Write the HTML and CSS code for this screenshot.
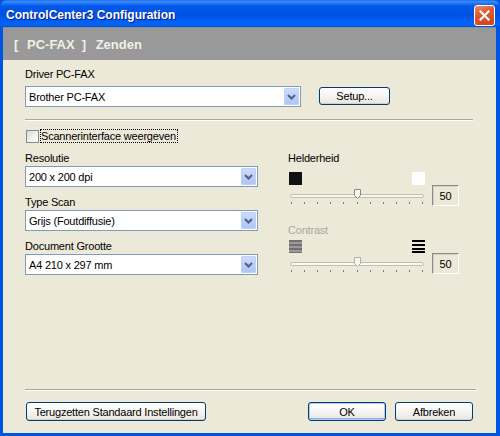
FILE: index.html
```html
<!DOCTYPE html>
<html lang="nl">
<head>
    <meta charset="UTF-8">
    <title>ControlCenter3 Configuration</title>
    <link rel="stylesheet" href="styles.css">
</head>
<body>
    <div class="window">
        <div class="titlebar">
            <span class="title">ControlCenter3 Configuration</span>
            <div class="close-btn">
                <svg width="11" height="11" viewBox="0 0 11 11">
                    <path d="M1.5 1.5 L9.5 9.5 M9.5 1.5 L1.5 9.5" stroke="#fff" stroke-width="2.2" stroke-linecap="square"/>
                </svg>
            </div>
        </div>

        <div class="frame">
            <div class="header">
                <span class="bracket">[</span>
                <span class="tab-name">PC-FAX</span>
                <span class="bracket">]</span>
                <span class="tab-sub">Zenden</span>
            </div>

            <div class="content">
                <div class="label">Driver PC-FAX</div>
                <div class="driver-row">
                    <div class="select select-driver">
                        <span class="select-text">Brother PC-FAX</span>
                        <span class="select-arrow">
                            <svg width="9" height="6" viewBox="0 0 9 6"><path d="M1 1 L4.5 4.5 L8 1" fill="none" stroke="#4d6185" stroke-width="2"/></svg>
                        </span>
                    </div>
                    <div class="btn btn-setup">Setup...</div>
                </div>

                <div class="separator separator-top"></div>

                <div class="check-row">
                    <span class="checkbox"></span>
                    <span class="check-label">Scannerinterface weergeven</span>
                </div>

                <div class="columns">
                    <div class="col-left">
                        <div class="field">
                            <div class="label">Resolutie</div>
                            <div class="select">
                                <span class="select-text">200 x 200 dpi</span>
                                <span class="select-arrow">
                                    <svg width="9" height="6" viewBox="0 0 9 6"><path d="M1 1 L4.5 4.5 L8 1" fill="none" stroke="#4d6185" stroke-width="2"/></svg>
                                </span>
                            </div>
                        </div>
                        <div class="field">
                            <div class="label">Type Scan</div>
                            <div class="select">
                                <span class="select-text">Grijs (Foutdiffusie)</span>
                                <span class="select-arrow">
                                    <svg width="9" height="6" viewBox="0 0 9 6"><path d="M1 1 L4.5 4.5 L8 1" fill="none" stroke="#4d6185" stroke-width="2"/></svg>
                                </span>
                            </div>
                        </div>
                        <div class="field">
                            <div class="label">Document Grootte</div>
                            <div class="select">
                                <span class="select-text">A4 210 x 297 mm</span>
                                <span class="select-arrow">
                                    <svg width="9" height="6" viewBox="0 0 9 6"><path d="M1 1 L4.5 4.5 L8 1" fill="none" stroke="#4d6185" stroke-width="2"/></svg>
                                </span>
                            </div>
                        </div>
                    </div>

                    <div class="col-right">
                        <div class="label">Helderheid</div>
                        <div class="slider-grid slider-bright">
                            <div class="slider-icons">
                                <span class="swatch swatch-black"></span>
                                <span class="swatch swatch-white"></span>
                            </div>
                            <span></span>
                            <svg class="slider" width="136" height="21" viewBox="0 0 136 21">
                                <rect x="1.5" y="9.5" width="133" height="3" rx="1.5" fill="#f7f6f1" stroke="#c2bfb0"/>
                                <g fill="#7a7a7a">
                                    <rect x="2" y="17" width="1" height="2"/><rect x="15" y="17" width="1" height="2"/>
                                    <rect x="28" y="17" width="1" height="2"/><rect x="41" y="17" width="1" height="2"/>
                                    <rect x="54" y="17" width="1" height="2"/><rect x="68" y="17" width="1" height="2"/>
                                    <rect x="81" y="17" width="1" height="2"/><rect x="94" y="17" width="1" height="2"/>
                                    <rect x="107" y="17" width="1" height="2"/><rect x="120" y="17" width="1" height="2"/>
                                    <rect x="133" y="17" width="1" height="2"/>
                                </g>
                                <path d="M65.5 4.5 H71.5 V10.5 L68.5 13.5 L65.5 10.5 Z" fill="#f6f6f2" stroke="#8a8a82"/>
                            </svg>
                            <div class="value-box">50</div>
                        </div>

                        <div class="label label-disabled">Contrast</div>
                        <div class="slider-grid slider-contrast">
                            <div class="slider-icons">
                                <svg width="13" height="13" viewBox="0 0 13 13">
                                    <rect width="13" height="13" fill="#9a9a9a"/>
                                    <rect y="0" width="13" height="2" fill="#707070"/>
                                    <rect y="4" width="13" height="2" fill="#707070"/>
                                    <rect y="8" width="13" height="2" fill="#707070"/>
                                    <rect y="12" width="13" height="1" fill="#707070"/>
                                </svg>
                                <svg width="13" height="13" viewBox="0 0 13 13">
                                    <rect y="0" width="13" height="2" fill="#000"/>
                                    <rect y="4" width="13" height="2" fill="#000"/>
                                    <rect y="8" width="13" height="2" fill="#000"/>
                                    <rect y="11" width="13" height="2" fill="#000"/>
                                </svg>
                            </div>
                            <span></span>
                            <svg class="slider" width="136" height="21" viewBox="0 0 136 21">
                                <rect x="1.5" y="9.5" width="133" height="3" rx="1.5" fill="#f7f6f1" stroke="#c2bfb0"/>
                                <g fill="#7a7a7a">
                                    <rect x="2" y="17" width="1" height="2"/><rect x="15" y="17" width="1" height="2"/>
                                    <rect x="28" y="17" width="1" height="2"/><rect x="41" y="17" width="1" height="2"/>
                                    <rect x="54" y="17" width="1" height="2"/><rect x="68" y="17" width="1" height="2"/>
                                    <rect x="81" y="17" width="1" height="2"/><rect x="94" y="17" width="1" height="2"/>
                                    <rect x="107" y="17" width="1" height="2"/><rect x="120" y="17" width="1" height="2"/>
                                    <rect x="133" y="17" width="1" height="2"/>
                                </g>
                                <path d="M65.5 4.5 H71.5 V10.5 L68.5 13.5 L65.5 10.5 Z" fill="#f6f6f2" stroke="#b0b0a8"/>
                            </svg>
                            <div class="value-box">50</div>
                        </div>
                    </div>
                </div>

                <div class="footer">
                    <div class="separator separator-bottom"></div>
                    <div class="button-row">
                        <div class="btn btn-reset">Terugzetten Standaard Instellingen</div>
                        <div class="button-group">
                            <div class="btn btn-default">OK</div>
                            <div class="btn btn-cancel">Afbreken</div>
                        </div>
                    </div>
                </div>
            </div>
        </div>
    </div>
</body>
</html>
```

FILE: styles.css
```css
* {
    margin: 0;
    padding: 0;
    box-sizing: border-box;
}

body {
    font-family: 'Liberation Sans', Arial, sans-serif;
    font-size: 11px;
    letter-spacing: -0.2px;
    color: #000;
    background: #ece9d8;
    overflow: hidden;
}

.window {
    width: 500px;
    height: 436px;
    display: flex;
    flex-direction: column;
    background: #0054e3;
}

/* Title bar */
.titlebar {
    height: 27px;
    display: flex;
    align-items: center;
    justify-content: space-between;
    padding: 0 5px 0 6px;
    border-radius: 7px 7px 0 0;
    background: linear-gradient(180deg,
        #0a5be0 0, #3d8ffc 1px, #2a7cf5 3px, #0058e8 6px,
        #0053e4 16px, #005ef3 21px, #0066fb 25px, #0052dc 27px);
}

.title {
    font-weight: bold;
    font-size: 12px;
    letter-spacing: 0;
    color: #fff;
    margin-top: 2px;
    text-shadow: 1px 1px 0 #0a1883;
}

.close-btn {
    width: 21px;
    height: 21px;
    margin-top: 3px;
    display: flex;
    align-items: center;
    justify-content: center;
    border: 1px solid #fff;
    border-radius: 3px;
    background: linear-gradient(160deg, #ec8a6a 0, #e0582f 40%, #cc4520 100%);
}

/* Frame */
.frame {
    flex: 1;
    display: flex;
    flex-direction: column;
    border-left: 3px solid #0054e3;
    border-right: 4px solid #0054e3;
    border-bottom: 3px solid #0054e3;
}

.header {
    height: 33px;
    display: flex;
    align-items: center;
    padding-left: 11px;
    padding-top: 1px;
    background: #999;
    border-top: 1px solid #8a8a8a;
    font-weight: bold;
    font-size: 13px;
    letter-spacing: 0;
    color: #f2f0e6;
}

.bracket {
    width: 4px;
}

.tab-name {
    margin: 0 7px 0 9px;
}

.tab-sub {
    margin-left: 10px;
}

.content {
    flex: 1;
    display: flex;
    flex-direction: column;
    padding: 7px 0 12px 22px;
    background: #ece9d8;
}

.label {
    line-height: 14px;
    margin-bottom: 5px;
}

.label-disabled {
    color: #aca899;
}

/* Combo boxes */
.driver-row {
    display: flex;
    align-items: flex-start;
}

.select {
    width: 233px;
    height: 21px;
    display: flex;
    align-items: center;
    justify-content: space-between;
    border: 1px solid #7f9db9;
    background: #fff;
    padding: 0 1px 0 3px;
}

.select-driver {
    width: 276px;
}

.select-arrow {
    width: 15px;
    height: 17px;
    display: flex;
    align-items: center;
    justify-content: center;
    border: 1px solid #bcd0f8;
    border-radius: 1px;
    background: linear-gradient(180deg, #cddbfc 0%, #bccff9 50%, #b0c6f6 100%);
}

/* Buttons */
.btn {
    height: 19px;
    display: flex;
    align-items: center;
    justify-content: center;
    border: 1px solid #003c74;
    border-radius: 3px;
    background: linear-gradient(180deg, #fff 0%, #f5f4f0 55%, #e6e5de 100%);
    box-shadow: inset 0 -1px 0 #d6d0c5;
}

.btn-setup {
    width: 71px;
    height: 18px;
    margin: 1px 0 0 18px;
}

.separator {
    height: 2px;
    border-top: 1px solid #aca899;
    border-bottom: 1px solid #fff;
}

.separator-top {
    width: 448px;
    margin-top: 12px;
}

/* Checkbox */
.check-row {
    display: flex;
    align-items: center;
    height: 14px;
    margin-top: 8px;
}

.checkbox {
    width: 13px;
    height: 13px;
    border: 1px solid #7b8d9d;
    background: linear-gradient(135deg, #dcdad2 0%, #f4f3ee 60%, #fff 100%);
    margin-left: 1px;
}

.check-label {
    line-height: 14px;
    padding: 0 2px 0 1px;
    margin-left: 1px;
    outline: 1px dotted #000;
    outline-offset: -1px;
}

/* Two columns */
.columns {
    display: flex;
    margin-top: 8px;
}

.col-left {
    width: 233px;
}

.col-left .label {
    margin-bottom: 1px;
}

.field + .field {
    margin-top: 8px;
}

.col-right {
    margin-left: 30px;
}

.col-right .label {
    margin-bottom: 0;
}

.slider-grid {
    display: grid;
    grid-template-columns: 136px 27px;
    column-gap: 7px;
    margin-left: 1px;
}

.slider-bright {
    margin-top: 7px;
    margin-bottom: 17px;
}

.slider-contrast {
    margin-top: 3px;
}

.slider-icons {
    height: 13px;
    display: flex;
    justify-content: space-between;
}

.swatch {
    width: 13px;
    height: 13px;
}

.swatch-black {
    background: #111;
}

.swatch-white {
    background: #fff;
}

.slider {
    display: block;
}

.value-box {
    height: 21px;
    display: flex;
    align-items: center;
    justify-content: center;
    border: 1px solid;
    border-color: #8e8b7e #fff #fff #8e8b7e;
    box-shadow: inset 1px 1px 0 #d4d0c8;
}

/* Footer */
.footer {
    margin-top: auto;
}

.separator-bottom {
    width: 451px;
}

.button-row {
    width: 448px;
    display: flex;
    justify-content: space-between;
    margin-top: 11px;
}

.btn-reset {
    width: 180px;
    margin-left: 1px;
}

.button-group {
    display: flex;
    gap: 9px;
}

.btn-default,
.btn-cancel {
    width: 78px;
}

.btn-default {
    box-shadow: inset 0 0 0 1px #b0c8f4, inset 0 -1px 0 1px #8eaeea;
}
```
